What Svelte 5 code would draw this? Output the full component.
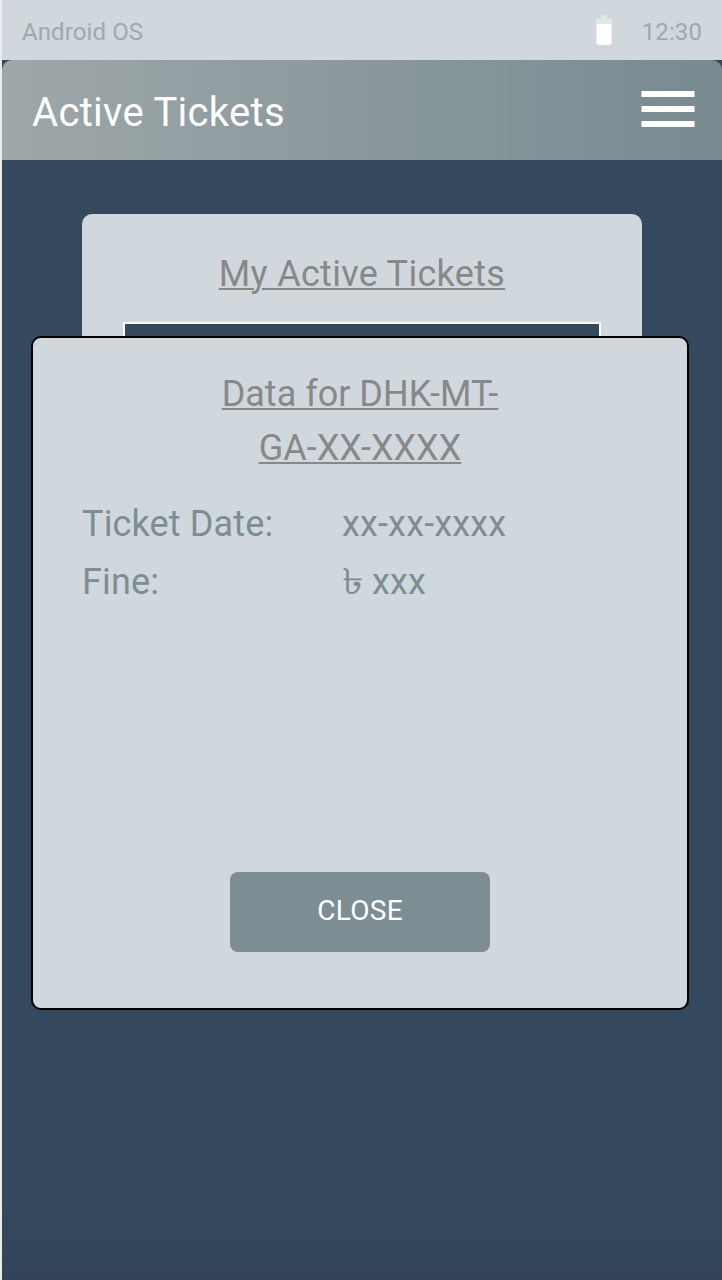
<script>
  const rows = [
    { label: 'Ticket Date:', value: 'xx-xx-xxxx' },
    { label: 'Fine:', currency: '৳', value: 'xxx' }
  ];
</script>

<div class="screen">
  <div class="status">
    <span>Android OS</span>
    <svg class="battery" width="16" height="30" viewBox="0 0 16 30" aria-hidden="true">
      <path d="M0 9V5a2 2 0 0 1 2-2h3V0h6v3h3a2 2 0 0 1 2 2v4z" fill="#e0e7e8" />
      <path d="M.5 9v19a2 2 0 0 0 2 2h11a2 2 0 0 0 2-2V9z" fill="#fff" />
    </svg>
    <span class="time">12:30</span>
  </div>
  <header>
    <h1>Active Tickets</h1>
    <svg width="54" height="36" viewBox="0 0 54 36" aria-label="Menu">
      <path d="M.5 0h53v6H.5zM.5 15h53v6H.5zM.5 30h53v6H.5z" fill="#fff" />
    </svg>
  </header>
  <main>
    <section class="card">
      <h2 class="spaced">My Active Tickets</h2>
      <div class="list"></div>
    </section>
  </main>
  <div class="modal">
    <h2>Data for DHK-MT-<br />GA-XX-XXXX</h2>
    <dl>
      {#each rows as row}
        <dt>{row.label}</dt>
        <dd>{#if row.currency}<span class="taka">{row.currency}</span>{/if}{row.value}</dd>
      {/each}
    </dl>
    <button>CLOSE</button>
  </div>
</div>

<style>
  .screen {
    position: relative;
    box-sizing: border-box;
    width: 722px;
    height: 1280px;
    border-left: 2px solid #e9ecea;
    overflow: hidden;
    background: linear-gradient(#34495d 0, #34495d 1210px, #33435a 1280px);
    font-family: Roboto, "Liberation Sans", sans-serif;
  }
  .status {
    display: flex;
    align-items: center;
    box-sizing: border-box;
    height: 60px;
    padding: 3px 20px 0;
    background: #d0d8de;
    color: #a0a8aa;
    font-size: 24px;
    letter-spacing: 0.1px;
  }
  .battery { margin: -3px 30px 0 auto; }
  header {
    display: flex;
    align-items: center;
    justify-content: space-between;
    box-sizing: border-box;
    height: 100px;
    padding: 0 27px 0 30px;
    border-radius: 10px 10px 0 0;
    background: linear-gradient(to right, #9ea7a9, #7b8d93 90%, #788b91);
    color: #fff;
  }
  header svg { margin-top: -2px; }
  h1, h2 { margin: 0; font-weight: 400; }
  h1 { margin-top: 6px; font-size: 40px; line-height: 60px; letter-spacing: 0.3px; }
  main { padding: 54px 80px 0; }
  .card {
    box-sizing: border-box;
    height: 560px;
    padding: 33px 41px 0;
    border-radius: 10px;
    background: #d0d8de;
  }
  h2 {
    color: #888;
    font-size: 36px;
    line-height: 54px;
    text-align: center;
    text-decoration: underline;
    text-decoration-thickness: 2px;
    text-underline-offset: 2px;
  }
  .spaced { letter-spacing: 0.3px; }
  .list {
    height: 300px;
    margin-top: 21px;
    border: 2px solid #fff;
    background: #34495d;
  }
  .modal {
    position: absolute;
    top: 336px;
    left: 29px;
    display: flex;
    flex-direction: column;
    align-items: center;
    box-sizing: border-box;
    width: 658px;
    height: 674px;
    padding: 29px 48px 56px;
    border: 2px solid #000;
    border-radius: 10px;
    background: #d0d8de;
  }
  dl {
    display: grid;
    grid-template-columns: 260px 1fr;
    row-gap: 4px;
    width: 100%;
    margin: 22px 0 auto;
    padding-left: 1px;
    box-sizing: border-box;
    color: #7c8e94;
    font-size: 36px;
    line-height: 54px;
    letter-spacing: 0.15px;
  }
  dd { margin: 0; }
  .taka {
    display: inline-block;
    width: 30px;
    line-height: 1;
    transform: scaleX(1.2);
    transform-origin: left;
  }
  button {
    width: 260px;
    height: 80px;
    padding: 0 0 4px;
    border: 0;
    border-radius: 8px;
    background: #7c8d93;
    color: #fff;
    font: 28px Roboto, sans-serif;
    letter-spacing: 0.3px;
  }
</style>
